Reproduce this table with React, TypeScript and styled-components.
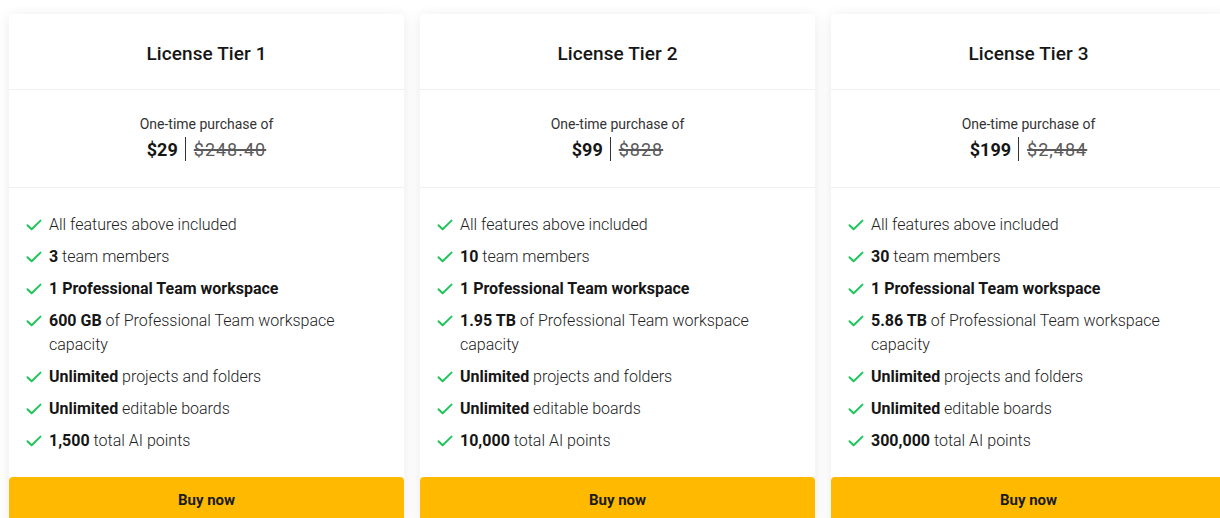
import React from "react";
import styled, { createGlobalStyle } from "styled-components";

const GlobalStyle = createGlobalStyle`
  html, body {
    margin: 0;
    padding: 0;
    background: #ffffff;
    overflow: hidden;
  }
  body {
    font-family: Roboto, "Liberation Sans", Arial, sans-serif;
    color: #1f1f1f;
  }
`;

const Page = styled.div`
  display: grid;
  grid-template-columns: repeat(3, 395px);
  column-gap: 16px;
  align-items: start;
  padding: 14px 0 0 9px;
  width: max-content;
`;

const Card = styled.div`
  background: #fff;
  border-radius: 4px;
  box-shadow: 0 2px 14px rgba(0, 0, 0, 0.09);
  display: flex;
  flex-direction: column;
`;

const Header = styled.div`
  height: 76px;
  display: flex;
  align-items: center;
  justify-content: center;
  border-bottom: 1px solid #f0f0f0;
  box-sizing: border-box;
  padding-top: 3px;
`;

const Title = styled.h2`
  margin: 0;
  font-size: 19px;
  font-weight: 500;
  color: #161616;
  letter-spacing: 0.1px;
`;

const PriceBlock = styled.div`
  height: 98px;
  box-sizing: border-box;
  border-bottom: 1px solid #f0f0f0;
  display: flex;
  flex-direction: column;
  align-items: center;
  padding-top: 25px;
`;

const PriceLabel = styled.div`
  font-size: 14px;
  font-weight: 400;
  color: #333;
  line-height: 18px;
`;

const PriceRow = styled.div`
  display: flex;
  align-items: center;
  margin-top: 4px;
  height: 24px;
`;

const Price = styled.span`
  font-size: 18px;
  font-weight: 700;
  color: #161616;
  padding-right: 7px;
`;

const Divider = styled.span`
  width: 1px;
  height: 24px;
  background: #333;
`;

const OldPrice = styled.span`
  font-size: 18px;
  font-weight: 400;
  color: #5a5a5a;
  letter-spacing: 1px;
  text-decoration: line-through;
  text-decoration-thickness: 1.5px;
  padding-left: 8px;
`;

const Features = styled.ul`
  list-style: none;
  margin: 0;
  padding: 25px 40px 0 17px;
  display: flex;
  flex-direction: column;
  gap: 8px;
`;

const Feature = styled.li`
  display: flex;
  align-items: flex-start;
  gap: 7px;
  font-size: 16px;
  line-height: 24px;
  font-weight: 300;
  color: #222;

  b {
    font-weight: 700;
    color: #161616;
  }
`;

const CheckWrap = styled.span`
  flex: 0 0 16px;
  height: 24px;
  display: flex;
  align-items: center;
`;

const BuyButton = styled.button`
  border: none;
  border-radius: 4px 4px 0 0;
  background: #ffba00;
  height: 46px;
  margin-top: 24px;
  font-family: Roboto, "Liberation Sans", Arial, sans-serif;
  font-size: 15px;
  font-weight: 700;
  color: #1a1a1a;
  padding: 0;
  cursor: pointer;
`;

const Check = () => (
  <CheckWrap>
    <svg width="16" height="14" viewBox="0 0 16 14" fill="none">
      <path
        d="M1.5 7.2 L5.6 11.2 L14.5 2.6"
        stroke="#1fc45a"
        strokeWidth="2"
        strokeLinecap="round"
        strokeLinejoin="round"
      />
    </svg>
  </CheckWrap>
);

type Tier = {
  title: string;
  price: string;
  old: string;
  members: string;
  capacity: string;
  points: string;
};

const tiers: Tier[] = [
  { title: "License Tier 1", price: "$29", old: "$248.40", members: "3", capacity: "600 GB", points: "1,500" },
  { title: "License Tier 2", price: "$99", old: "$828", members: "10", capacity: "1.95 TB", points: "10,000" },
  { title: "License Tier 3", price: "$199", old: "$2,484", members: "30", capacity: "5.86 TB", points: "300,000" },
];

export default function App() {
  return (
    <>
      <GlobalStyle />
      <Page>
        {tiers.map((t) => (
          <Card key={t.title}>
            <Header>
              <Title>{t.title}</Title>
            </Header>
            <PriceBlock>
              <PriceLabel>One-time purchase of</PriceLabel>
              <PriceRow>
                <Price>{t.price}</Price>
                <Divider />
                <OldPrice>{t.old}</OldPrice>
              </PriceRow>
            </PriceBlock>
            <Features>
              <Feature><Check /><span>All features above included</span></Feature>
              <Feature><Check /><span><b>{t.members}</b> team members</span></Feature>
              <Feature><Check /><span><b>1 Professional Team workspace</b></span></Feature>
              <Feature><Check /><span><b>{t.capacity}</b> of Professional Team workspace capacity</span></Feature>
              <Feature><Check /><span><b>Unlimited</b> projects and folders</span></Feature>
              <Feature><Check /><span><b>Unlimited</b> editable boards</span></Feature>
              <Feature><Check /><span><b>{t.points}</b> total AI points</span></Feature>
            </Features>
            <BuyButton>Buy now</BuyButton>
          </Card>
        ))}
      </Page>
    </>
  );
}
